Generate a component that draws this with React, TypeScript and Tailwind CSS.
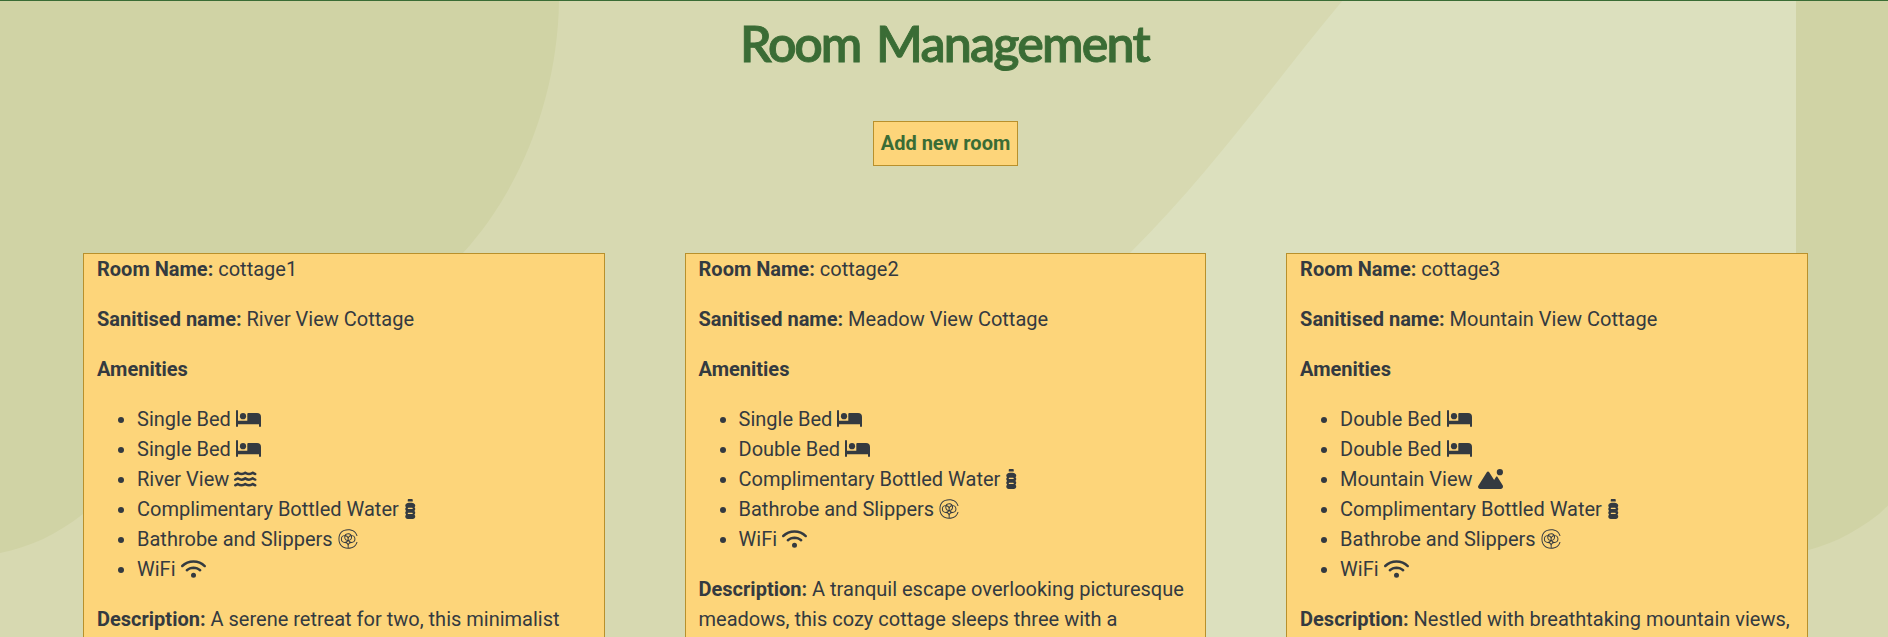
import { FaWater, FaBottleWater, FaCottonBureau, FaWifi, FaMountainSun } from "react-icons/fa6";
import type { ComponentType } from "react";

type IconProps = { className?: string };
type Amenity = { label: string; icon: ComponentType<IconProps>; width: string };
type Room = { name: string; sanitised: string; amenities: Amenity[]; description: string };

function BedIcon({ className }: IconProps) {
  return (
    <svg className={className} viewBox="0 0 25 20" fill="currentColor" aria-hidden="true">
      <path d="M0 2a1 1 0 0 1 2 0V11.7H11.3V5a1 1 0 0 1 1-1H21a4 4 0 0 1 4 4V17a1 1 0 0 1-2 0V15.3H2V17a1 1 0 0 1-2 0Z" />
      <circle cx="7" cy="7.2" r="3.1" />
    </svg>
  );
}

const single: Amenity = { label: "Single Bed", icon: BedIcon, width: "w-[25px]" };
const double: Amenity = { label: "Double Bed", icon: BedIcon, width: "w-[25px]" };
const common: Amenity[] = [
  { label: "Complimentary Bottled Water", icon: FaBottleWater, width: "w-[12.5px]" },
  { label: "Bathrobe and Slippers", icon: FaCottonBureau, width: "w-5" },
  { label: "WiFi", icon: FaWifi, width: "w-[25px]" },
];

const rooms: Room[] = [
  {
    name: "cottage1",
    sanitised: "River View Cottage",
    amenities: [single, single, { label: "River View", icon: FaWater, width: "w-[22.5px]" }, ...common],
    description: "A serene retreat for two, this minimalist",
  },
  {
    name: "cottage2",
    sanitised: "Meadow View Cottage",
    amenities: [single, double, ...common],
    description: "A tranquil escape overlooking picturesque meadows, this cozy cottage sleeps three with a",
  },
  {
    name: "cottage3",
    sanitised: "Mountain View Cottage",
    amenities: [double, double, { label: "Mountain View", icon: FaMountainSun, width: "w-[25px]" }, ...common],
    description: "Nestled with breathtaking mountain views,",
  },
];

function Backdrop() {
  return (
    <svg className="absolute inset-0 -z-10 h-full w-full" viewBox="0 1 1888 636" preserveAspectRatio="none" aria-hidden="true">
      <rect width="1888" height="637" fill="#d7d9b1" />
      <path d="M1343 0C1276 80 1214 169 1130 253L1100 290V637H1796V0Z" fill="#dce0be" />
      <path id="blob" d="M0 0H559C558 90 525 185 463 253C350 370 200 400 83 514C56 535 30 547 0 553Z" fill="#d0d3a5" />
      <use href="#blob" x="1796" />
    </svg>
  );
}

function RoomCard({ room }: { room: Room }) {
  return (
    <article className="border border-[#b8902c] bg-[#fdd57a] px-[13px]">
      <p className="mb-5"><strong>Room Name:</strong> {room.name}</p>
      <p className="mb-5"><strong>Sanitised name:</strong> {room.sanitised}</p>
      <p className="mb-5"><strong>Amenities</strong></p>
      <ul className="mb-5 list-disc pl-10">
        {room.amenities.map(({ label, icon: Icon, width }, i) => (
          <li key={i}>
            {label} <Icon className={`inline-block h-5 align-[-0.125em] ${width}`} />
          </li>
        ))}
      </ul>
      <p className="mb-5"><strong>Description:</strong> {room.description}</p>
    </article>
  );
}

export default function App() {
  return (
    <main className="relative isolate h-[637px] overflow-hidden border-t border-[#3a6c35] font-[Roboto,sans-serif] text-xl leading-[30px] text-[#343a40]">
      <Backdrop />
      <h1 className="mt-2.5 flex justify-center gap-4 pl-px font-[Lato,sans-serif] text-[50px] leading-[64px] font-semibold text-[#3a6c35] [-webkit-text-stroke:0.9px_#3a6c35]">
        <span className="tracking-[-2.2px]">Room</span>
        <span className="tracking-[-1.8px]">Management</span>
      </h1>
      <div className="mt-[46px] flex justify-center pl-[3px]">
        <button className="h-[45px] border border-[#b8902c] bg-[#fdd57a] px-[7px] pb-0.5 font-bold text-[#3a6c35]">Add new room</button>
      </div>
      <section className="mt-[87px] grid grid-cols-3 items-start gap-20 pr-[80.4px] pl-[83px]">
        {rooms.map((room) => <RoomCard key={room.name} room={room} />)}
      </section>
    </main>
  );
}
